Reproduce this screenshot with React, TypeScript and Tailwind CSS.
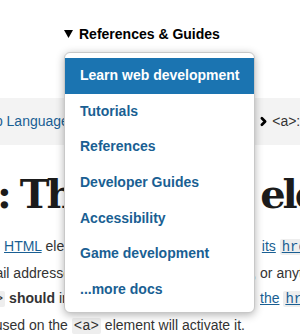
import { ChevronRight } from 'lucide-react';

const menuItems = [
  'Learn web development',
  'Tutorials',
  'References',
  'Developer Guides',
  'Accessibility',
  'Game development',
  '...more docs',
];

const Code = ({ children, link }: { children: string; link?: boolean }) => (
  <code
    className={`rounded-[2px] bg-[#eeeeee] px-[2px] font-['Liberation_Mono',monospace] text-[14px] ${
      link ? 'text-[#1a5f93] underline' : 'text-[#333]'
    }`}
  >
    {children}
  </code>
);

const A = ({ children }: { children: string }) => (
  <a className="text-[#1a5f93] underline">{children}</a>
);

const App = () => {
  return (
    <div className="h-[336px] w-[300px] overflow-hidden bg-white font-['Liberation_Sans',Arial,sans-serif] text-[#333]">
      {/* Top nav with open dropdown */}
      <nav className="flex h-[44px] items-end pl-[64px]">
        <div className="relative flex h-[20px] items-center gap-[6px] text-[14px] font-bold text-black">
          <svg width="9" height="8" viewBox="0 0 9 8" className="shrink-0">
            <polygon points="0,0 9,0 4.5,8" fill="#000" />
          </svg>
          <span>References &amp; Guides</span>

          <ul className="absolute left-0 top-[28px] z-10 w-[191px] rounded-[6px] border border-[#c8c8c8] bg-white py-[5px] shadow-[0_2px_9px_rgba(0,0,0,0.3)]">
            {menuItems.map((item, i) => (
              <li
                key={item}
                className={`flex h-[35.6px] items-center whitespace-nowrap px-[15px] text-[14px] font-bold ${
                  i === 0 ? 'bg-[#1b74b1] text-white' : 'text-[#1a5f93]'
                }`}
              >
                {item}
              </li>
            ))}
          </ul>
        </div>
      </nav>

      {/* Breadcrumbs */}
      <div className="mt-[54px] flex h-[47px] items-center whitespace-nowrap bg-[#f3f3f3] text-[14px]">
        <span className="ml-[-44px] text-[#1a5f93]">Markup Language</span>
        <ChevronRight className="mx-[6px] h-[13px] w-[13px] shrink-0 text-black" strokeWidth={5} />
        <span className="text-[#1a5f93]">HTML element reference</span>
        <ChevronRight className="ml-[9px] mr-[2px] h-[13px] w-[13px] shrink-0 text-black" strokeWidth={5} />
        <span className="text-[#333]">&lt;a&gt;: The Anchor element</span>
      </div>

      {/* Title */}
      <h1 className="mt-[25px] ml-[-3px] whitespace-nowrap font-['DejaVu_Serif',serif] text-[40px] font-bold leading-[48px] tracking-[-3px] text-[#1b1b1b]">
        : The Anchor element
      </h1>

      {/* Intro paragraph */}
      <div className="mt-[16px] ml-[-24px] whitespace-nowrap text-[14px] leading-[25.5px]">
        <div>
          The <A>HTML</A> element (or anchor element), with&nbsp; <A>its</A> <Code link>href</Code> attribute, creates a hyperlink
        </div>
        <div>email addresses, locations in the same page, or anything else a URL can address.</div>
        <div>
          <Code>&lt;a&gt;</Code> <b>should</b> indicate the link's destination. If&nbsp; <A>the</A> <Code link>href</Code> attribute is present
        </div>
        <div>
          focused on the <Code>&lt;a&gt;</Code> element will activate it.
        </div>
      </div>
    </div>
  );
};

export default App;
